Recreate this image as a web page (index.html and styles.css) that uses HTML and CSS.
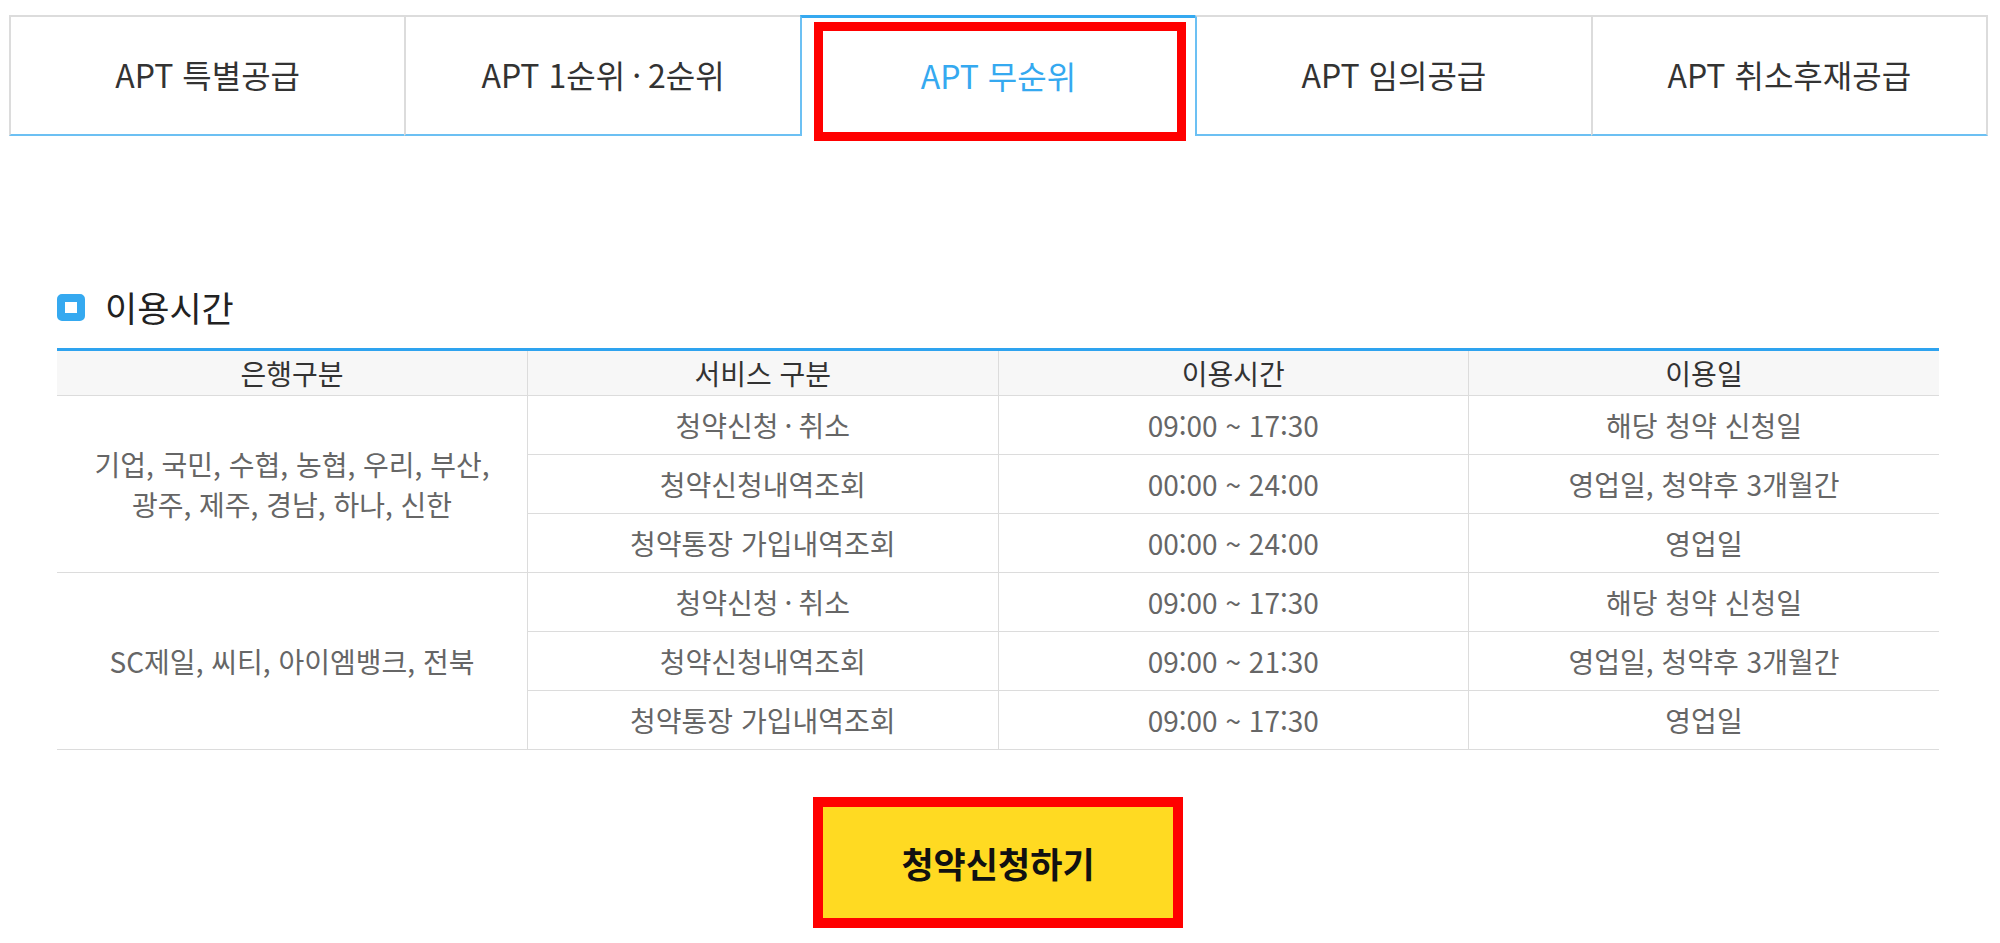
FILE: index.html
```html
<!DOCTYPE html>
<html lang="ko">
<head>
	<meta charset="UTF-8">
	<title>청약 이용시간</title>
	<link rel="stylesheet" href="styles.css">
</head>
<body>
	<ul class="tabs">
		<li class="tab">APT 특별공급</li>
		<li class="tab">APT 1순위<span class="dot">·</span>2순위</li>
		<li class="tab on">APT 무순위<span class="mark"></span></li>
		<li class="tab">APT 임의공급</li>
		<li class="tab">APT 취소후재공급</li>
	</ul>

	<div class="content">
		<h3 class="title"><span class="title-icon"></span>이용시간</h3>
		<table class="time-table">
			<thead>
				<tr>
					<th>은행구분</th>
					<th>서비스 구분</th>
					<th>이용시간</th>
					<th>이용일</th>
				</tr>
			</thead>
			<tbody>
				<tr>
					<td rowspan="3" class="bank">기업, 국민, 수협, 농협, 우리, 부산,<br>광주, 제주, 경남, 하나, 신한</td>
					<td>청약신청<span class="dot">·</span>취소</td>
					<td>09:00 ~ 17:30</td>
					<td>해당 청약 신청일</td>
				</tr>
				<tr>
					<td>청약신청내역조회</td>
					<td>00:00 ~ 24:00</td>
					<td>영업일, 청약후 3개월간</td>
				</tr>
				<tr>
					<td>청약통장 가입내역조회</td>
					<td>00:00 ~ 24:00</td>
					<td>영업일</td>
				</tr>
				<tr>
					<td rowspan="3" class="bank">SC제일, 씨티, 아이엠뱅크, 전북</td>
					<td>청약신청<span class="dot">·</span>취소</td>
					<td>09:00 ~ 17:30</td>
					<td>해당 청약 신청일</td>
				</tr>
				<tr>
					<td>청약신청내역조회</td>
					<td>09:00 ~ 21:30</td>
					<td>영업일, 청약후 3개월간</td>
				</tr>
				<tr>
					<td>청약통장 가입내역조회</td>
					<td>09:00 ~ 17:30</td>
					<td>영업일</td>
				</tr>
			</tbody>
		</table>

		<div class="btn-mark">
			<a class="btn-apply" href="#">청약신청하기</a>
		</div>
	</div>
</body>
</html>
```

FILE: styles.css
```css
body {
	margin: 0;
	background: #fff;
	font-family: "Noto Sans CJK KR", "Noto Sans", sans-serif;
}

.tabs {
	display: flex;
	list-style: none;
	margin: 15px 12px 0 9px;
	padding: 0;
}

.tab {
	position: relative;
	flex: 1;
	display: flex;
	align-items: center;
	justify-content: center;
	box-sizing: border-box;
	height: 121px;
	padding-bottom: 4px;
	border-top: 2px solid #dcdcdc;
	border-left: 2px solid #dcdcdc;
	border-bottom: 2px solid #6cc0f3;
	font-size: 32px;
	color: #333;
}

.tab:last-child {
	border-right: 2px solid #dcdcdc;
}

.tab.on {
	border: 2px solid #6cc0f3;
	border-top: 3px solid #35a9f0;
	border-right: none;
	border-bottom: none;
	color: #35a9f0;
}

.tab.on + .tab {
	border-left-color: #6cc0f3;
}

.dot {
	padding: 0 0.22em;
}

.mark {
	position: absolute;
	left: 12px;
	top: 4px;
	box-sizing: border-box;
	width: 372px;
	height: 119px;
	border: 9px solid #ff0000;
}

.content {
	margin: 0 61px 0 57px;
}

.title {
	display: flex;
	align-items: center;
	gap: 20px;
	margin: 150px 0 20px;
	font-size: 35px;
	line-height: 42px;
	font-weight: normal;
	color: #222;
}

.title-icon {
	box-sizing: border-box;
	width: 28px;
	height: 27px;
	border: 8px solid #35a9f0;
	border-radius: 5px;
	background: #fff;
}

.time-table {
	width: 100%;
	table-layout: fixed;
	border-collapse: collapse;
	border-top: 3px solid #2ea3ef;
	font-size: 28px;
	text-align: center;
}

.time-table th {
	height: 44px;
	padding: 0;
	background: #f7f7f7;
	font-weight: normal;
	color: #333;
	border-bottom: 1px solid #dcdcdc;
	border-left: 1px solid #dcdcdc;
}

.time-table td {
	height: 58px;
	padding: 0;
	color: #666;
	border-bottom: 1px solid #dcdcdc;
	border-left: 1px solid #dcdcdc;
}

.time-table th:first-child,
.time-table td.bank {
	border-left: none;
}

.time-table td.bank {
	line-height: 40px;
}

.btn-mark {
	width: 370px;
	box-sizing: border-box;
	margin: 47px auto 0;
	border: 10px solid #ff0000;
}

.btn-apply {
	display: flex;
	align-items: center;
	justify-content: center;
	height: 111px;
	background: #ffda22;
	color: #111;
	font-size: 35px;
	font-weight: bold;
	text-decoration: none;
}
```
